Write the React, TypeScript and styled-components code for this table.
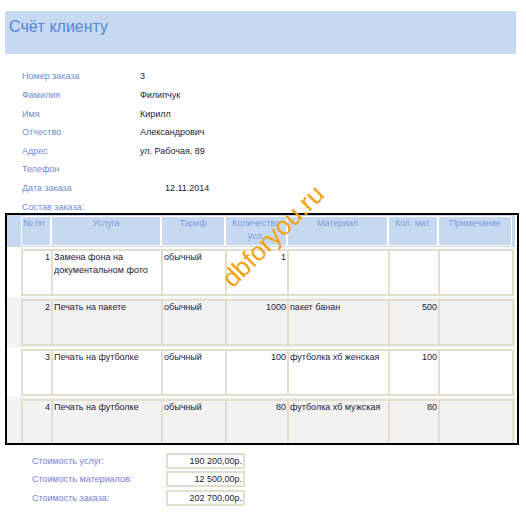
import React from 'react';
import styled, { createGlobalStyle } from 'styled-components';

const GlobalStyle = createGlobalStyle`
  html, body { margin: 0; padding: 0; background: #fff; }
  body { font-family: "Liberation Sans", Arial, sans-serif; }
  * { box-sizing: border-box; }
`;

const Page = styled.div`
  position: relative;
  width: 526px;
  height: 514px;
  overflow: hidden;
  padding-top: 11px;
`;

const Banner = styled.header`
  margin-left: 5px;
  width: 511px;
  height: 43px;
  background: #c6d9f0;
  padding: 6px 0 0 4px;
`;

const Title = styled.h1`
  margin: 0;
  font-size: 16px;
  font-weight: normal;
  line-height: 20px;
  color: #5087d6;
`;

const Fields = styled.div`
  margin-top: 13.4px;
  padding-left: 22px;
  display: grid;
  grid-template-columns: 118px 1fr;
  grid-auto-rows: 18.6px;
  font-size: 9px;
  line-height: 18.6px;
`;

const FieldLabel = styled.div`
  color: #6c8bd2;
`;

const FieldValue = styled.div<{ $indent?: number }>`
  color: #22243a;
  padding-left: ${p => p.$indent ?? 0}px;
`;

const Caption = styled.div`
  margin-top: 3px;
  padding-left: 22px;
  font-size: 9px;
  line-height: 12px;
  height: 12px;
  color: #6c8bd2;
`;

const Table = styled.div`
  margin: 0.4px 0 0 5px;
  width: 514px;
  height: 232px;
  border: 2px solid #000;
  overflow: hidden;
`;

const cols = '30px 110px 64px 62px 101px 50px 74px';

const HeadRow = styled.div`
  width: 508px;
  height: 32px;
  background: #c6d9f0;
  padding: 1px 0 0 14px;
  display: grid;
  grid-template-columns: ${cols};
`;

const HeadCell = styled.div<{ $left?: boolean }>`
  height: 30px;
  border: 1px solid #fff;
  font-size: 9px;
  line-height: 13px;
  color: #7c9fdc;
  text-align: ${p => (p.$left ? 'left' : 'center')};
  padding: 0 1px;
  letter-spacing: -0.1px;
`;

const Band = styled.div<{ $alt: boolean }>`
  width: 508px;
  height: 50px;
  padding: 2px 0 0 14px;
  background: ${p => (p.$alt ? '#f2f2f2' : '#ffffff')};
`;

const DataGrid = styled.div<{ $alt: boolean }>`
  width: 493px;
  height: 47px;
  display: grid;
  grid-template-columns: 28px 108px 62px 60px 99px 48px 72px;
  gap: 2px;
  padding: 2px;
  background: #e4ddc9;
  & > div { background: ${p => (p.$alt ? '#f2f2f2' : '#ffffff')}; }
`;

const Cell = styled.div<{ $right?: boolean }>`
  font-size: 9px;
  line-height: 13px;
  color: #1e2036;
  padding: 0 1px;
  text-align: ${p => (p.$right ? 'right' : 'left')};
  overflow: hidden;
`;

const Summary = styled.div`
  margin-top: 8px;
  padding-left: 32px;
  display: grid;
  grid-template-columns: 134px 79px;
  grid-auto-rows: 16px;
  row-gap: 2.35px;
  align-items: center;
  font-size: 9px;
`;

const SumLabel = styled.div`
  color: #7381dc;
`;

const SumBox = styled.div`
  height: 16px;
  border: 2px solid #e4ddc9;
  line-height: 12px;
  text-align: right;
  padding-right: 1px;
  color: #1e2036;
`;

const Watermark = styled.span`
  position: absolute;
  left: 207px;
  top: 223px;
  font-family: "Liberation Sans", Arial, sans-serif;
  font-size: 26px;
  line-height: 26px;
  color: #f2a20a;
  transform: rotate(-45deg);
  transform-origin: center;
  white-space: nowrap;
  pointer-events: none;
`;

const fields: [string, string, number?][] = [
  ['Номер заказа', '3'],
  ['Фамилия', 'Филипчук'],
  ['Имя', 'Кирилл'],
  ['Отчество', 'Александрович'],
  ['Адрес', 'ул. Рабочая, 89'],
  ['Телефон', ''],
  ['Дата заказа', '12.11.2014', 25],
];

const headers = ['№ пп', 'Услуга', 'Тариф', 'Количество усл.', 'Материал', 'Кол. мат.', 'Примечание'];

const rows = [
  { n: '1', s: 'Замена фона на документальном фото', t: 'обычный', q: '1', m: '', k: '' },
  { n: '2', s: 'Печать на пакете', t: 'обычный', q: '1000', m: 'пакет банан', k: '500' },
  { n: '3', s: 'Печать на футболке', t: 'обычный', q: '100', m: 'футболка хб женская', k: '100' },
  { n: '4', s: 'Печать на футболке', t: 'обычный', q: '80', m: 'футболка хб мужская', k: '80' },
];

const totals = [
  ['Стоимость услуг:', '190 200,00р.'],
  ['Стоимость материалов:', '12 500,00р.'],
  ['Стоимость заказа:', '202 700,00р.'],
];

export default function App() {
  return (
    <Page>
      <GlobalStyle />
      <Banner>
        <Title>Счёт клиенту</Title>
      </Banner>
      <Fields>
        {fields.map(([l, v, ind]) => (
          <React.Fragment key={l}>
            <FieldLabel>{l}</FieldLabel>
            <FieldValue $indent={ind}>{v}</FieldValue>
          </React.Fragment>
        ))}
      </Fields>
      <Caption>Состав заказа:</Caption>
      <Table>
        <HeadRow>
          {headers.map((h, i) => (
            <HeadCell key={h} $left={i === 0}>{h}</HeadCell>
          ))}
        </HeadRow>
        {rows.map((r, i) => (
          <Band key={r.n} $alt={i % 2 === 1}>
            <DataGrid $alt={i % 2 === 1}>
              <Cell $right>{r.n}</Cell>
              <Cell>{r.s}</Cell>
              <Cell>{r.t}</Cell>
              <Cell $right>{r.q}</Cell>
              <Cell>{r.m}</Cell>
              <Cell $right>{r.k}</Cell>
              <Cell />
            </DataGrid>
          </Band>
        ))}
      </Table>
      <Summary>
        {totals.map(([l, v]) => (
          <React.Fragment key={l}>
            <SumLabel>{l}</SumLabel>
            <SumBox>{v}</SumBox>
          </React.Fragment>
        ))}
      </Summary>
      <Watermark>dbforyou.ru</Watermark>
    </Page>
  );
}
